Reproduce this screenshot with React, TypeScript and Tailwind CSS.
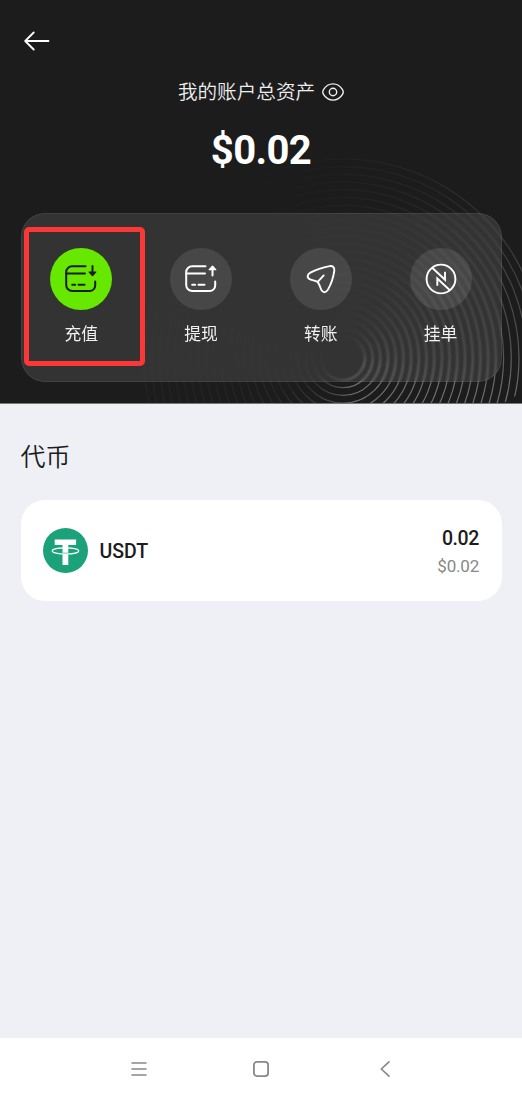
import React from "react";

type IconProps = { className?: string };

const CJK = "font-['Noto_Sans_CJK_SC',sans-serif]";
const LATIN = "font-[Roboto,'Noto_Sans_CJK_SC',sans-serif]";

// Radii of the decorative rings behind the header
const RINGS = Array.from({ length: 24 }, (_, i) => 22 + i * 7.7);

const BackIcon: React.FC<IconProps> = ({ className }) => (
  <svg className={className} viewBox="0 0 26 20" fill="none" stroke="currentColor" strokeWidth="1.8" strokeLinecap="round" strokeLinejoin="round">
    <path d="M24.500 10H1.200M9.700 1.500 1.200 10l8.500 8.500" />
  </svg>
);

const EyeIcon: React.FC<IconProps> = ({ className }) => (
  <svg className={className} viewBox="0 0 22 18" fill="none" stroke="currentColor" strokeWidth="1.400">
    <path d="M11 .9C6.200.9 3.200 3.900 1.500 6.600.6 8.100.6 9.900 1.500 11.400 3.200 14.100 6.200 17.100 11 17.100s7.800-3 9.500-5.700c.9-1.500.9-3.300 0-4.800C18.800 3.900 15.800.9 11 .9Z" />
    <circle cx="11" cy="9" r="3.700" />
  </svg>
);

const CardFrame = () => (
  <>
    <path d="M21.500 2.200H8.200a6 6 0 0 0-6 6v12.800a6 6 0 0 0 6 6h17.500a5.500 5.500 0 0 0 5.500-5.500V17.500" />
    <path d="M2.200 9.600h18.800M8.200 20.800h3M14.500 20.800h6" />
  </>
);

const DepositIcon: React.FC<IconProps> = ({ className }) => (
  <svg className={className} viewBox="0 0 34 29" fill="none" stroke="currentColor" strokeWidth="2" strokeLinecap="round" strokeLinejoin="round">
    <CardFrame />
    <path d="M28.500 2v9" />
    <path d="m25.200 8 3.300 3.500L31.800 8Z" fill="currentColor" strokeWidth="1.200" />
  </svg>
);

const WithdrawIcon: React.FC<IconProps> = ({ className }) => (
  <svg className={className} viewBox="0 0 34 29" fill="none" stroke="currentColor" strokeWidth="2" strokeLinecap="round" strokeLinejoin="round">
    <CardFrame />
    <path d="M28.500 11.500V3" />
    <path d="m25.200 5.700 3.300-3.500 3.300 3.500Z" fill="currentColor" strokeWidth="1.200" />
  </svg>
);

const TransferIcon: React.FC<IconProps> = ({ className }) => (
  <svg className={className} viewBox="0 0 34 34" fill="none" stroke="currentColor" strokeWidth="1.900" strokeLinecap="round" strokeLinejoin="round">
    <path d="M6.400 10.700C12 7.600 18.800 5.400 25.600 4.100c3.200-.6 5.100 1.400 4.700 4.500-.9 6.700-3 13-6.200 18.800-2.200 3.800-5.200 3.800-6.900.2-1.100-2.500-1.800-5.200-3.500-7.700-2.600-1.300-5-1.500-7.500-2.500-3.500-1.500-3.400-4.700.2-6.700Z" />
    <path d="m13.700 19.900 6-6.500" />
  </svg>
);

const OrderIcon: React.FC<IconProps> = ({ className }) => (
  <svg className={className} viewBox="0 0 34 34" fill="none" stroke="currentColor" strokeWidth="1.900">
    <circle cx="17" cy="17" r="14.400" />
    <path d="m8.200 5.700 12.800 12V9.800M25.900 28.300 13.300 16.500v7.200" />
  </svg>
);

const TetherIcon: React.FC<IconProps> = ({ className }) => (
  <svg className={className} viewBox="0 0 45 45">
    <circle cx="22.500" cy="22.500" r="22.500" fill="#1ba27a" />
    <path d="M11.700 11.500h21.400v5.600h-7.800v20h-5.800v-20h-7.800Z" fill="#fff" />
    <ellipse cx="22.500" cy="22.900" rx="13.300" ry="3.100" fill="none" stroke="#fff" strokeWidth="1.200" />
    <path d="M19.500 25c2 .2 3.900.2 5.800 0" fill="none" stroke="#1ba27a" strokeWidth=".6" />
  </svg>
);

const Rings: React.FC<IconProps> = ({ className }) => (
  <svg className={className} viewBox="0 0 522 404" fill="none">
    <defs>
      {/* Applied to each ring's own box, so every ring fades towards its top left */}
      <linearGradient id="ringFade" x1="0.15" y1="0.15" x2="0.8" y2="0.8">
        <stop offset="0" stopColor="#fff" stopOpacity="0" />
        <stop offset="0.15" stopColor="#fff" stopOpacity="0.02" />
        <stop offset="0.37" stopColor="#fff" stopOpacity="0.05" />
        <stop offset="0.54" stopColor="#fff" stopOpacity="0.1" />
        <stop offset="0.9" stopColor="#fff" stopOpacity="0.24" />
        <stop offset="1" stopColor="#fff" stopOpacity="0.36" />
      </linearGradient>
      <clipPath id="ringClip">
        <path d="M0 0h522v392l-20 12H0Z" />
      </clipPath>
    </defs>
    <g clipPath="url(#ringClip)" stroke="url(#ringFade)" strokeWidth="1.200">
      {RINGS.map((r) => (
        <circle key={r} cx="343" cy="358" r={r} />
      ))}
    </g>
  </svg>
);

const ACTIONS = [
  { label: "充值", Icon: DepositIcon, size: "w-[34px] h-[29px]", active: true },
  { label: "提现", Icon: WithdrawIcon, size: "w-[34px] h-[29px]", active: false },
  { label: "转账", Icon: TransferIcon, size: "w-[34px] h-[34px]", active: false },
  { label: "挂单", Icon: OrderIcon, size: "w-[34px] h-[34px]", active: false },
];

/**
 * Dark top section: total balance and the row of wallet actions
 */
const BalanceHeader: React.FC = () => (
  <header className="relative h-[404px] shrink-0 overflow-hidden border-b border-[#77787a] bg-[#1c1c1c] text-white">
    <Rings className="absolute inset-0 h-[404px] w-[522px]" />

    <button className="relative ml-[24px] mt-[31px] block">
      <BackIcon className="h-5 w-[26px]" />
    </button>

    {/* Total assets */}
    <div className="relative mt-[28px] flex items-center justify-center gap-[7px] text-[#eee]">
      <span className={`${CJK} -mt-[2px] text-[19.6px] font-[350] leading-[28px]`}>我的账户总资产</span>
      <EyeIcon className="h-[18px] w-[22px]" />
    </div>
    <p className={`${LATIN} relative mt-[22px] text-center text-[40px] font-bold leading-[48px] tracking-[-0.6px]`}>$0.02</p>

    {/* Action buttons */}
    <div className="relative mx-[20.5px] mt-[37.5px] grid h-[169px] grid-cols-4 rounded-[24px] border border-white/[0.07] bg-white/10 pt-[34px] backdrop-blur-[1.2px]">
      {ACTIONS.map(({ label, Icon, size, active }) => (
        <button key={label} className="flex flex-col items-center">
          <span
            className={`flex size-[62px] items-center justify-center rounded-full ${
              active ? "bg-[#66e800] text-[#1c1c1c]" : "bg-white/10 text-white"
            }`}
          >
            <Icon className={size} />
          </span>
          <span className={`${CJK} mt-[11px] text-[16.8px] leading-[25px] text-[#f2f2f2]`}>{label}</span>
        </button>
      ))}
      {/* Highlight around the deposit action */}
      <div className="absolute left-[2.5px] top-[13.5px] h-[139px] w-[121px] rounded-[5px] border-[5px] border-[#fc3737]" />
    </div>
  </header>
);

const TokenRow: React.FC = () => (
  <div className="mt-[27px] flex h-[101px] items-center rounded-[24px] bg-white px-[22.5px]">
    <TetherIcon className="size-[45px]" />
    <span className={`${LATIN} ml-[11.5px] mt-[2px] text-[19.5px] font-medium text-[#1c1c1c]`}>USDT</span>
    <div className={`${LATIN} ml-auto mt-[4px] text-right`}>
      <p className="text-[19.5px] font-medium leading-[28px] tracking-[-0.4px] text-[#1c1c1c]">0.02</p>
      <p className="text-[17px] leading-[27px] tracking-[-0.2px] text-[#888]">$0.02</p>
    </div>
  </div>
);

/**
 * Android style navigation bar
 */
const SystemNav: React.FC = () => (
  <nav className="grid h-[60px] shrink-0 grid-cols-[124px_120px_128px] items-center justify-center bg-white pl-[4px] pt-[2px] text-[#888]">
    <svg className="mx-auto h-4 w-4" viewBox="0 0 16 16" stroke="currentColor" strokeWidth="1.600" strokeLinecap="round">
      <path d="M1 2h14M1 8h14M1 14h14" />
    </svg>
    <svg className="mx-auto h-[18px] w-[18px]" viewBox="0 0 18 18" fill="none" stroke="currentColor" strokeWidth="1.800">
      <rect x="1.900" y="1.900" width="14.200" height="14.200" rx="3" />
    </svg>
    <svg className="mx-auto h-[18px] w-[12px]" viewBox="0 0 12 18" fill="none" stroke="currentColor" strokeWidth="1.700" strokeLinecap="round" strokeLinejoin="round">
      <path d="M10 1.800 2.300 9l7.700 7.200" />
    </svg>
  </nav>
);

const App: React.FC = () => (
  <div className="flex h-[1098px] w-[522px] flex-col overflow-hidden bg-[#eff0f5]">
    <BalanceHeader />
    <main className="flex-1 px-[20.5px] pt-[33px]">
      <h2 className={`${CJK} text-[25px] font-[350] leading-[36px] text-[#1c1c1c]`}>代币</h2>
      <TokenRow />
    </main>
    <SystemNav />
  </div>
);

export default App;
